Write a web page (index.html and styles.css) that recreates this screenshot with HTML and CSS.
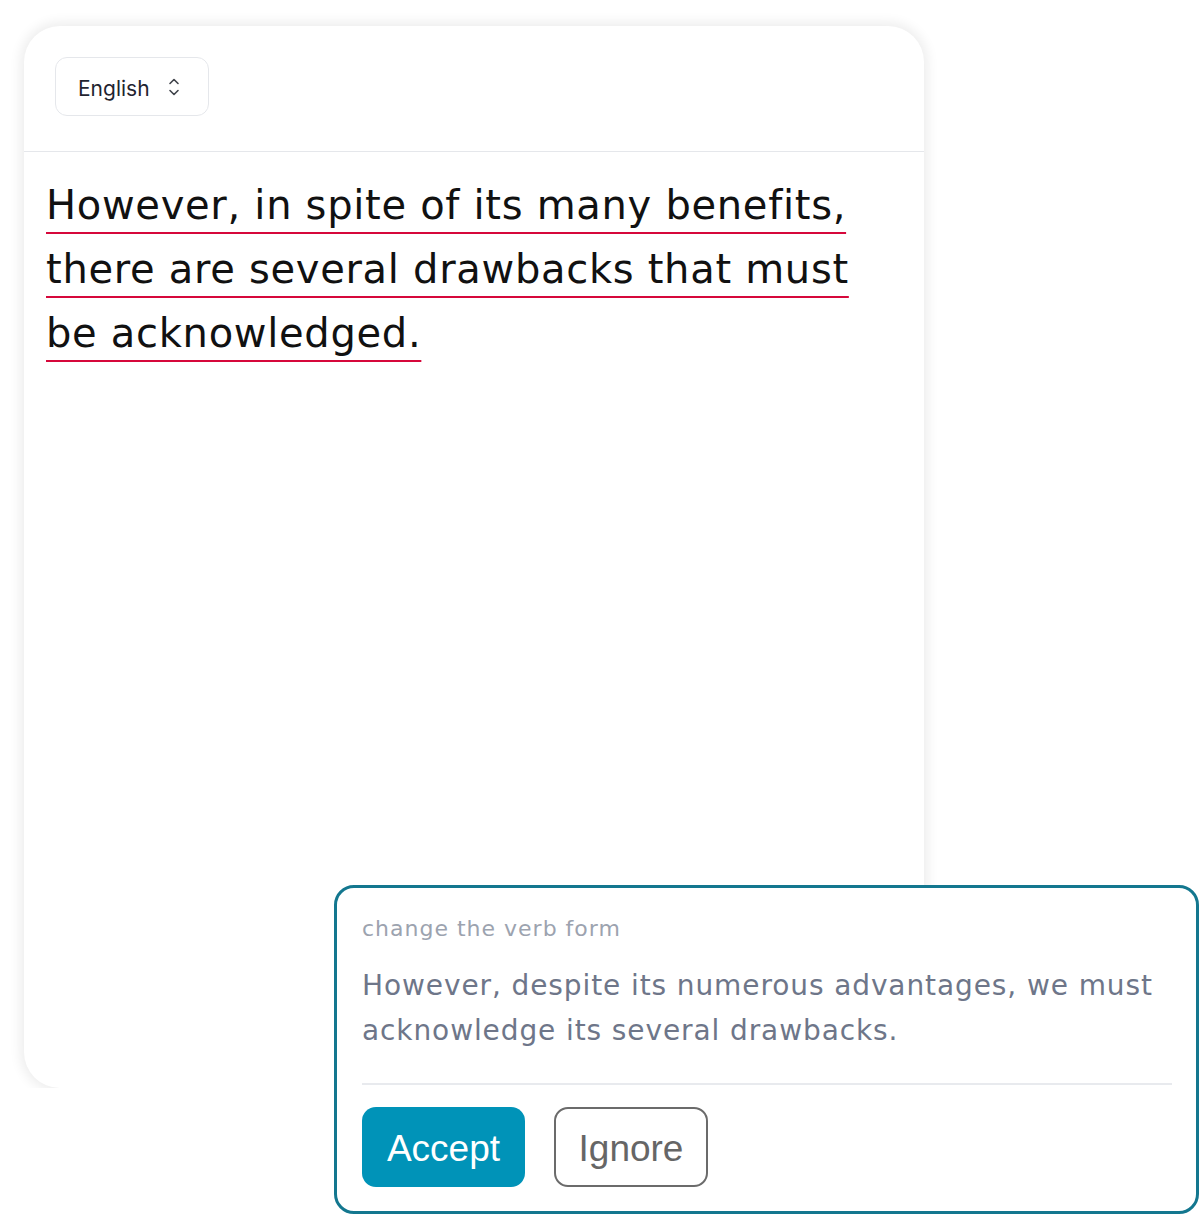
FILE: index.html
```html
<!DOCTYPE html>
<html lang="en">
  <head>
    <meta charset="UTF-8" />
    <meta name="viewport" content="width=device-width, initial-scale=1.0" />
    <title>Grammar check</title>
    <link rel="stylesheet" href="styles.css">
  </head>
  <body>
    <div class="editor">
      <div class="editor-head">
        <button class="lang-select">
          <span>English</span>
          <svg width="14" height="24" viewBox="0 0 14 24" fill="none" stroke="#3f434a" stroke-width="1.6" stroke-linecap="round" stroke-linejoin="round">
            <path d="M3 8.5 L7 4.5 L11 8.5" />
            <path d="M3 15.5 L7 19.5 L11 15.5" />
          </svg>
        </button>
      </div>
      <p class="editor-text">
        However, in spite of its many benefits,<br>
        there are several drawbacks that must<br>
        be acknowledged.
      </p>
    </div>

    <div class="suggestion">
      <p class="suggestion-label">change the verb form</p>
      <p class="suggestion-text">However, despite its numerous advantages, we must<br>acknowledge its several drawbacks.</p>
      <div class="suggestion-actions">
        <button class="btn btn-accept">Accept</button>
        <button class="btn btn-ignore">Ignore</button>
      </div>
    </div>
  </body>
</html>
```

FILE: styles.css
```css
body {
  margin: 0;
  background: #fff;
  font-family: "DejaVu Sans", "Open Sans", sans-serif;
}
.editor {
  margin: 26px 0 0 24px;
  width: 900px;
  height: 1062px;
  border-radius: 36px;
  background: #fff;
  box-shadow: 0 0 12px 4px rgba(0, 0, 0, 0.07);
  overflow: hidden;
}
.editor-head {
  padding: 31px 31px 35px;
  border-bottom: 1px solid #e5e7eb;
}
.lang-select {
  display: flex;
  align-items: center;
  gap: 17px;
  width: 154px;
  height: 59px;
  padding: 3px 0 0 22px;
  border: 1px solid #e5e7eb;
  border-radius: 12px;
  background: #fff;
  font-family: Inter, "Liberation Sans", sans-serif;
  font-size: 21px;
  color: #1f2430;
}
.lang-select svg {
  margin-top: -3px;
}
.editor-text {
  margin: 0;
  padding: 21px 0 0 22px;
  font-size: 40px;
  line-height: 64px;
  letter-spacing: 0.7px;
  color: #111;
  text-decoration: underline;
  text-decoration-color: #d6083b;
  text-decoration-thickness: 2px;
  text-underline-offset: 13px;
}

.suggestion {
  position: absolute;
  left: 334px;
  top: 885px;
  width: 810px;
  height: 323px;
  padding: 0 24px 0 25px;
  border: 3px solid #13778f;
  border-radius: 20px;
  background: #fff;
}
.suggestion-label {
  margin: 28px 0 0;
  font-size: 22px;
  letter-spacing: 1px;
  color: #9ca3af;
}
.suggestion-text {
  margin: 22px 0 0;
  font-size: 28px;
  line-height: 45px;
  letter-spacing: 0.9px;
  color: #6e7689;
  padding-bottom: 30px;
  border-bottom: 2px solid #e8eaee;
}
.suggestion-actions {
  display: flex;
  gap: 29px;
  margin-top: 22px;
}
.btn {
  height: 80px;
  padding: 4px 20px 0;
  border-radius: 14px;
  font-family: "Liberation Sans", Arial, sans-serif;
  font-size: 37px;
  cursor: pointer;
}
.btn-accept {
  width: 163px;
  background: #0093b8;
  border: none;
  color: #fff;
}
.btn-ignore {
  width: 154px;
  background: #fff;
  border: 2px solid #6b6b6b;
  color: #666;
}
```
